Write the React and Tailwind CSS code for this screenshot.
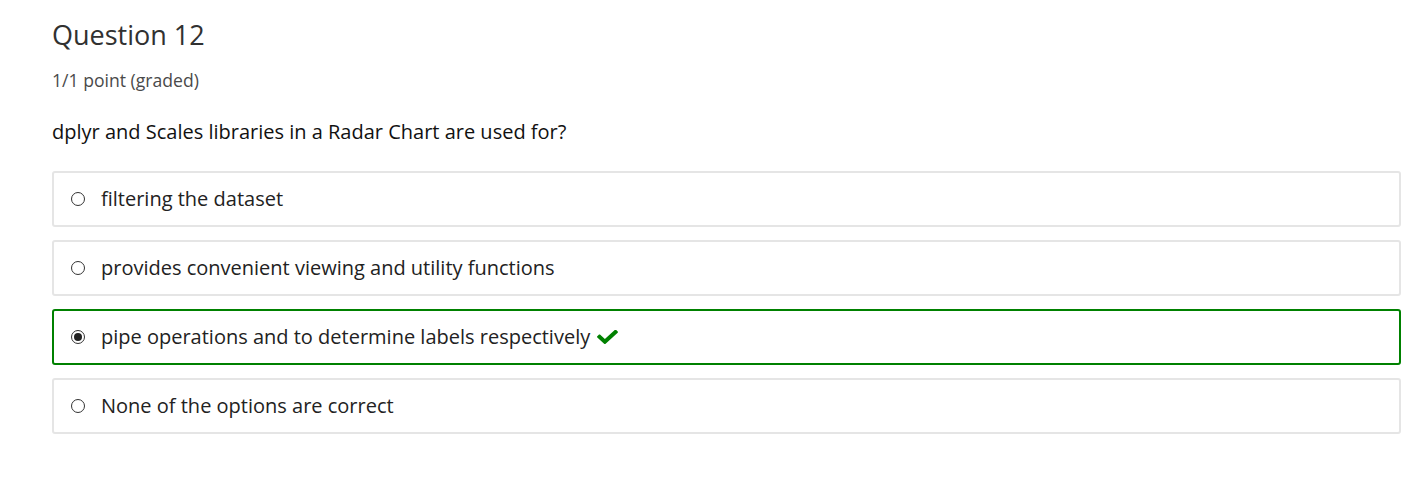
import React from "react";

const OPTIONS = [
  { key: "a", label: "filtering the dataset" },
  { key: "b", label: "provides convenient viewing and utility functions" },
  { key: "c", label: "pipe operations and to determine labels respectively", selected: true, correct: true },
  { key: "d", label: "None of the options are correct" },
];

function CheckIcon() {
  return (
    <svg viewBox="0 0 512 400" className="ml-[7px] h-[15px] w-[21px] fill-[#008100]" preserveAspectRatio="none">
      <path d="M173.9 367.4l-166.4-166.4c-10-10-10-26.2 0-36.2l36.2-36.2c10-10 26.2-10 36.2 0L192 240.7 432.1 0.6c10-10 26.2-10 36.2 0l36.2 36.2c10 10 10 26.2 0 36.2l-294.4 294.4c-10 10-26.2 10-36.2 0z" />
    </svg>
  );
}

function Radio({ checked }) {
  return (
    <span className="flex h-[14px] w-[14px] shrink-0 items-center justify-center rounded-full border border-[#333] bg-white">
      {checked && <span className="h-[8px] w-[8px] rounded-full bg-[#222]" />}
    </span>
  );
}

export default function App() {
  return (
    <div className="min-h-screen bg-white pl-[52px] pr-[22px] pt-[18px] font-['Open_Sans',sans-serif]">
      <h3 className="text-[27px] leading-[34px] text-[#313131]">Question 12</h3>
      <div className="mt-[16px] text-[17.6px] leading-[24px] text-[#4a4a4a]">1/1 point (graded)</div>
      <p className="mt-[25px] text-[20px] leading-[30px] text-[#111]">
        dplyr and Scales libraries in a Radar Chart are used for?
      </p>
      <div className="mt-[24px] flex flex-col gap-[13px]">
        {OPTIONS.map((o) => (
          <label
            key={o.key}
            className={`flex h-[56px] items-center rounded-[3px] border-2 pl-[17px] ${
              o.correct ? "border-[#008100]" : "border-[#e5e5e5]"
            }`}
          >
            <Radio checked={o.selected} />
            <span className="ml-[16px] text-[20px] text-[#222]">{o.label}</span>
            {o.correct && <CheckIcon />}
          </label>
        ))}
      </div>
    </div>
  );
}
